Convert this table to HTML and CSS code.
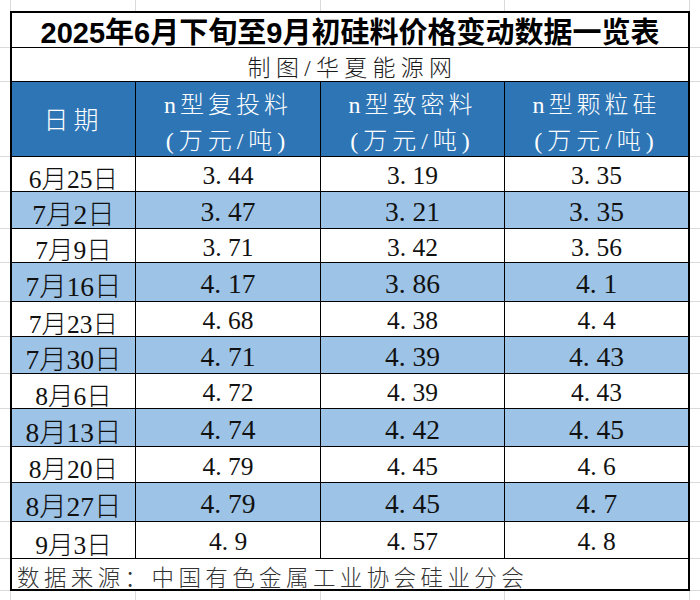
FILE: index.html
```html
<!DOCTYPE html>
<html lang="zh-CN">
<head>
<meta charset="utf-8">
<title>2025年6月下旬至9月初硅料价格变动数据一览表</title>
<link rel="stylesheet" href="styles.css">
</head>
<body>
<div class="sheet">
  <div class="row edge">
    <div class="g"></div><div class="g col"></div><div class="g col"></div><div class="g col"></div><div class="g col"></div><div class="g"></div>
  </div>
  <div class="row">
    <div class="g"></div><div class="span title">2025年6月下旬至9月初硅料价格变动数据一览表</div><div class="g"></div>
  </div>
  <div class="row">
    <div class="g"></div><div class="span sub">制图/华夏能源网</div><div class="g"></div>
  </div>
  <div class="row head">
    <div class="g"></div>
    <div class="c first"><span class="h1">日期</span></div>
    <div class="c"><span class="h1">n型复投料</span><span class="h2">(万元/吨)</span></div>
    <div class="c"><span class="h1">n型致密料</span><span class="h2">(万元/吨)</span></div>
    <div class="c last"><span class="h1">n型颗粒硅</span><span class="h2">(万元/吨)</span></div>
    <div class="g"></div>
  </div>
  <div class="row w">
    <div class="g"></div><div class="c first">6月25日</div><div class="c">3<span class="pt">.</span>44</div><div class="c">3<span class="pt">.</span>19</div><div class="c last">3<span class="pt">.</span>35</div><div class="g"></div>
  </div>
  <div class="row b">
    <div class="g"></div><div class="c first">7月2日</div><div class="c">3<span class="pt">.</span>47</div><div class="c">3<span class="pt">.</span>21</div><div class="c last">3<span class="pt">.</span>35</div><div class="g"></div>
  </div>
  <div class="row w">
    <div class="g"></div><div class="c first">7月9日</div><div class="c">3<span class="pt">.</span>71</div><div class="c">3<span class="pt">.</span>42</div><div class="c last">3<span class="pt">.</span>56</div><div class="g"></div>
  </div>
  <div class="row b">
    <div class="g"></div><div class="c first">7月16日</div><div class="c">4<span class="pt">.</span>17</div><div class="c">3<span class="pt">.</span>86</div><div class="c last">4<span class="pt">.</span>1</div><div class="g"></div>
  </div>
  <div class="row w">
    <div class="g"></div><div class="c first">7月23日</div><div class="c">4<span class="pt">.</span>68</div><div class="c">4<span class="pt">.</span>38</div><div class="c last">4<span class="pt">.</span>4</div><div class="g"></div>
  </div>
  <div class="row b">
    <div class="g"></div><div class="c first">7月30日</div><div class="c">4<span class="pt">.</span>71</div><div class="c">4<span class="pt">.</span>39</div><div class="c last">4<span class="pt">.</span>43</div><div class="g"></div>
  </div>
  <div class="row w">
    <div class="g"></div><div class="c first">8月6日</div><div class="c">4<span class="pt">.</span>72</div><div class="c">4<span class="pt">.</span>39</div><div class="c last">4<span class="pt">.</span>43</div><div class="g"></div>
  </div>
  <div class="row b">
    <div class="g"></div><div class="c first">8月13日</div><div class="c">4<span class="pt">.</span>74</div><div class="c">4<span class="pt">.</span>42</div><div class="c last">4<span class="pt">.</span>45</div><div class="g"></div>
  </div>
  <div class="row w">
    <div class="g"></div><div class="c first">8月20日</div><div class="c">4<span class="pt">.</span>79</div><div class="c">4<span class="pt">.</span>45</div><div class="c last">4<span class="pt">.</span>6</div><div class="g"></div>
  </div>
  <div class="row b">
    <div class="g"></div><div class="c first">8月27日</div><div class="c">4<span class="pt">.</span>79</div><div class="c">4<span class="pt">.</span>45</div><div class="c last">4<span class="pt">.</span>7</div><div class="g"></div>
  </div>
  <div class="row w">
    <div class="g"></div><div class="c first">9月3日</div><div class="c">4<span class="pt">.</span>9</div><div class="c">4<span class="pt">.</span>57</div><div class="c last">4<span class="pt">.</span>8</div><div class="g"></div>
  </div>
  <div class="row">
    <div class="g"></div><div class="span foot">数据来源：中国有色金属工业协会硅业分会</div><div class="g"></div>
  </div>
  <div class="row edge">
    <div class="g"></div><div class="g col"></div><div class="g col"></div><div class="g col"></div><div class="g col"></div><div class="g"></div>
  </div>
</div>
</body>
</html>
```

FILE: styles.css
```css
* {
  box-sizing: border-box;
  margin: 0;
  padding: 0;
}

html, body {
  background: #ffffff;
}

body {
  width: 700px;
  height: 600px;
  overflow: hidden;
  font-family: "Liberation Serif", "Noto Sans CJK SC", serif;
  color: #111111;
}

.sheet {
  display: grid;
  grid-template-columns: 10px 126px 185px 184px 185px 10px;
  grid-template-rows: 11px 37px 34px 75px 35px 37px 34px 39px 35px 37px 35px 38px 36px 39px 37px 32px 9px;
  width: 700px;
  height: 600px;
}

.row {
  display: contents;
}

/* spreadsheet gridlines outside the table */
.g {
  border-bottom: 1px solid #dadada;
}

.edge .g {
  border-bottom: none;
}

.edge .g.col {
  border-right: 1px solid #dadada;
}

.edge .g.col:nth-child(2) {
  border-left: 1px solid #dadada;
}

/* table cells */
.c {
  display: flex;
  flex-direction: row;
  align-items: center;
  justify-content: center;
  border-right: 1px solid #000000;
  border-bottom: 1px solid #000000;
  white-space: nowrap;
}

.c.first {
  border-left: 2px solid #000000;
}

.c.last {
  border-right: 2px solid #000000;
}

.span {
  grid-column: 2 / 6;
  display: flex;
  align-items: center;
  border-left: 2px solid #000000;
  border-right: 2px solid #000000;
  border-bottom: 1px solid #000000;
  white-space: nowrap;
}

.title {
  justify-content: center;
  border-top: 2px solid #000000;
  font-family: "Liberation Sans", "Noto Sans CJK SC", sans-serif;
  font-weight: 700;
  font-size: 29px;
  color: #000000;
}

.sub {
  justify-content: center;
  padding-top: 3px;
  padding-left: 5px;
  font-size: 23px;
  letter-spacing: 5.3px;
  font-weight: 300;
  color: #1a1a1a;
}

.foot {
  justify-content: flex-start;
  padding-left: 5px;
  padding-top: 4px;
  border-bottom: 2px solid #000000;
  font-size: 22.5px;
  letter-spacing: 4.4px;
  font-weight: 300;
  color: #333333;
}

/* header */
.head .c {
  flex-direction: column;
  background: #2e75b6;
  color: #ffffff;
  padding-top: 7px;
  font-size: 24px;
  font-weight: 300;
}

.head .c.first {
  padding-top: 4px;
  font-size: 25px;
}

.h1, .h2 {
  display: block;
  line-height: 36px;
  letter-spacing: 4px;
}

.h2 {
  letter-spacing: 5px;
}

.head .c.first .h1 {
  letter-spacing: 5px;
}

/* data rows */
.w .c {
  background: #ffffff;
  font-size: 25.5px;
  padding-top: 4px;
  font-weight: 300;
}

.b .c {
  background: #9dc3e6;
  font-size: 27.5px;
  padding-top: 4px;
  font-weight: 300;
}

.pt {
  display: inline-block;
  width: 0.5em;
  text-align: left;
}
```
